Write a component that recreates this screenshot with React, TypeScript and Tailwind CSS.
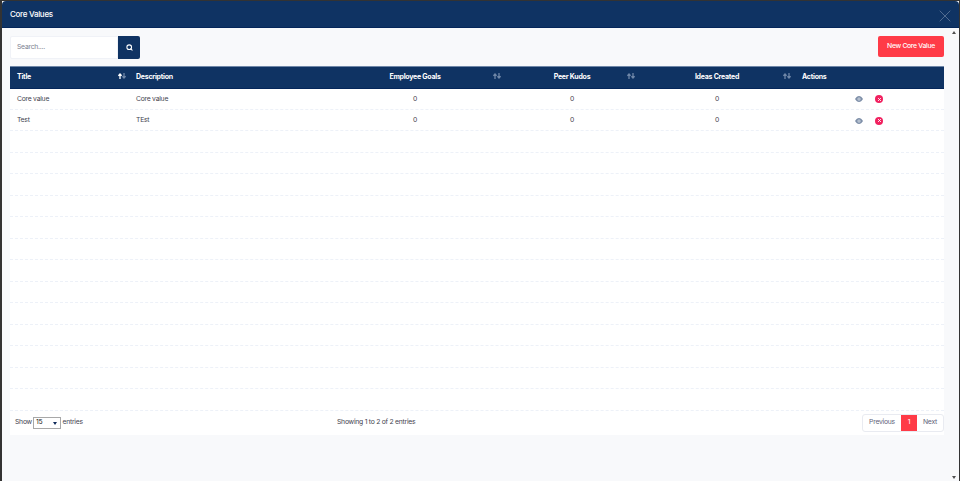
import { Search, X } from "lucide-react";

const cols = "grid grid-cols-[120px_195px_180px_134px_156px_149px]";

function Sort({ active = false }: { active?: boolean }) {
  return (
    <svg width="8" height="6" viewBox="0 0 8 6" className="block">
      <path d="M2 6V1.500M.4 2.800 2 1l1.600 1.800" fill="none" stroke={active ? "#ffffff" : "#6f87a8"} strokeWidth="1.300" />
      <path d="M6 0v4.500M4.400 3.200 6 5l1.600-1.800" fill="none" stroke="#6f87a8" strokeWidth="1.300" />
    </svg>
  );
}

function HeadCell({ label, center = false, active = false }: { label: string; center?: boolean; active?: boolean }) {
  return (
    <div className={`relative flex items-center ${center ? "justify-center" : "pl-[7px]"}`}>
      <span>{label}</span>
      <span className="absolute right-[4px] top-[5.500px]">
        <Sort active={active} />
      </span>
    </div>
  );
}

function EyeIcon() {
  return (
    <svg width="8" height="6" viewBox="0 0 8 6" className="block">
      <path d="M0 3C1.200 1 2.500 0 4 0s2.800 1 4 3C6.800 5 5.500 6 4 6S1.200 5 0 3Z" fill="#7e8fa8" />
      <circle cx="4" cy="3" r="1.500" fill="#dfe4ec" />
      <circle cx="4" cy="3" r="0.800" fill="#7e8fa8" />
    </svg>
  );
}

function Row({ title, desc }: { title?: string; desc?: string }) {
  return (
    <div className={`${cols} h-[21.47px] items-center border-b border-dashed border-[#edf1f8] text-[6.800px] tracking-[-0.25px] text-[#44444f]`}>
      {title ? (
        <>
          <div className="pl-[7px]">{title}</div>
          <div className="pl-[6px]">{desc}</div>
          <div className="text-center">0</div>
          <div className="text-center">0</div>
          <div className="text-center">0</div>
          <div className="flex items-center pl-[60px] pt-[1px]">
            <EyeIcon />
            <span className="ml-[12px] flex h-[8px] w-[8px] items-center justify-center rounded-full bg-[#f1215f]">
              <X size={5} strokeWidth={4} className="text-white" />
            </span>
          </div>
        </>
      ) : null}
    </div>
  );
}

export default function App() {
  return (
    <div className="h-[481px] w-[960px] overflow-hidden bg-[#333333] pl-[1.500px] pr-[1px] pt-[1px] font-['Inter','Liberation_Sans',sans-serif]">
      <div className="flex h-full flex-col bg-[#f8f9fb]">
        <div className="flex h-[27px] shrink-0 items-center justify-between rounded-t-[4px] border-b border-[#04265a] bg-[#0f3363] pl-[8.500px] pr-[4.500px]">
          <span className="text-[8px] font-medium tracking-[-0.3px] text-white">Core Values</span>
          <X size={20} strokeWidth={1} className="mt-[4px] text-[#5f7799]" />
        </div>
        <div className="flex min-h-0 flex-1">
          <div className="min-w-0 flex-1 pl-[8.500px] pr-[3px]">
            <div className="flex h-[38px] items-start justify-between pt-[8px]">
              <div className="flex h-[23px]">
                <div className="flex w-[108px] items-center rounded-l-[2px] border border-[#f0f2f7] bg-white pl-[6px] text-[6.800px] tracking-[-0.25px] text-[#7d8292]">
                  Search....
                </div>
                <div className="flex w-[22px] items-center justify-center rounded-r-[2px] bg-[#0f3363]">
                  <Search size={7} strokeWidth={3.500} className="text-white" />
                </div>
              </div>
              <div className="flex h-[21px] w-[66px] items-center justify-center rounded-[2px] bg-[#ff3b47] text-[6.800px] font-medium tracking-[-0.3px] text-white">
                New Core Value
              </div>
            </div>
            <div className="bg-white">
              <div className={`${cols} h-[22.500px] border-y border-t-[#6f87a8] border-b-[#04265a] bg-[#0f3363] text-[7px] font-bold tracking-[-0.25px] text-white`}>
                <HeadCell label="Title" active />
                <div className="flex items-center pl-[6px]">Description</div>
                <HeadCell label="Employee Goals" center />
                <HeadCell label="Peer Kudos" center />
                <HeadCell label="Ideas Created" center />
                <div className="flex items-center pl-[7px]">Actions</div>
              </div>
              <Row title="Core value" desc="Core value" />
              <Row title="Test" desc="TEst" />
              {Array.from({ length: 13 }).map((_, i) => (
                <Row key={i} />
              ))}
              <div className="flex h-[24px] items-center text-[6.800px] tracking-[-0.25px] text-[#44444f]">
                <div className="flex w-[327px] items-center pl-[5px]">
                  <span className="w-[18px]">Show</span>
                  <span className="relative mr-[1.500px] flex h-[12px] w-[28px] items-center border border-[#a8a8a8] pl-[2px] text-[#222]">
                    15
                    <span className="absolute right-[3px] top-[4px] h-0 w-0 border-x-[2.500px] border-t-[3px] border-x-transparent border-t-[#0f2a5a]" />
                  </span>
                  entries
                </div>
                <div>Showing 1 to 2 of 2 entries</div>
                <div className="ml-auto flex h-[18px] items-stretch overflow-hidden rounded-[3px] border border-[#e9ebf1] bg-white text-[#5e6278]">
                  <span className="flex w-[38px] items-center justify-center">Previous</span>
                  <span className="flex w-[16px] items-center justify-center bg-[#ff3b47] text-white">1</span>
                  <span className="flex w-[26px] items-center justify-center">Next</span>
                </div>
              </div>
            </div>
          </div>
          <div className="relative w-[12px] shrink-0">
            <span className="absolute left-[4.500px] top-[3px] h-0 w-0 border-x-[2.500px] border-b-[3px] border-x-transparent border-b-[#505050]" />
            <span className="absolute bottom-[2px] left-[4.500px] h-0 w-0 border-x-[2.500px] border-t-[3px] border-x-transparent border-t-[#505050]" />
          </div>
        </div>
      </div>
    </div>
  );
}
